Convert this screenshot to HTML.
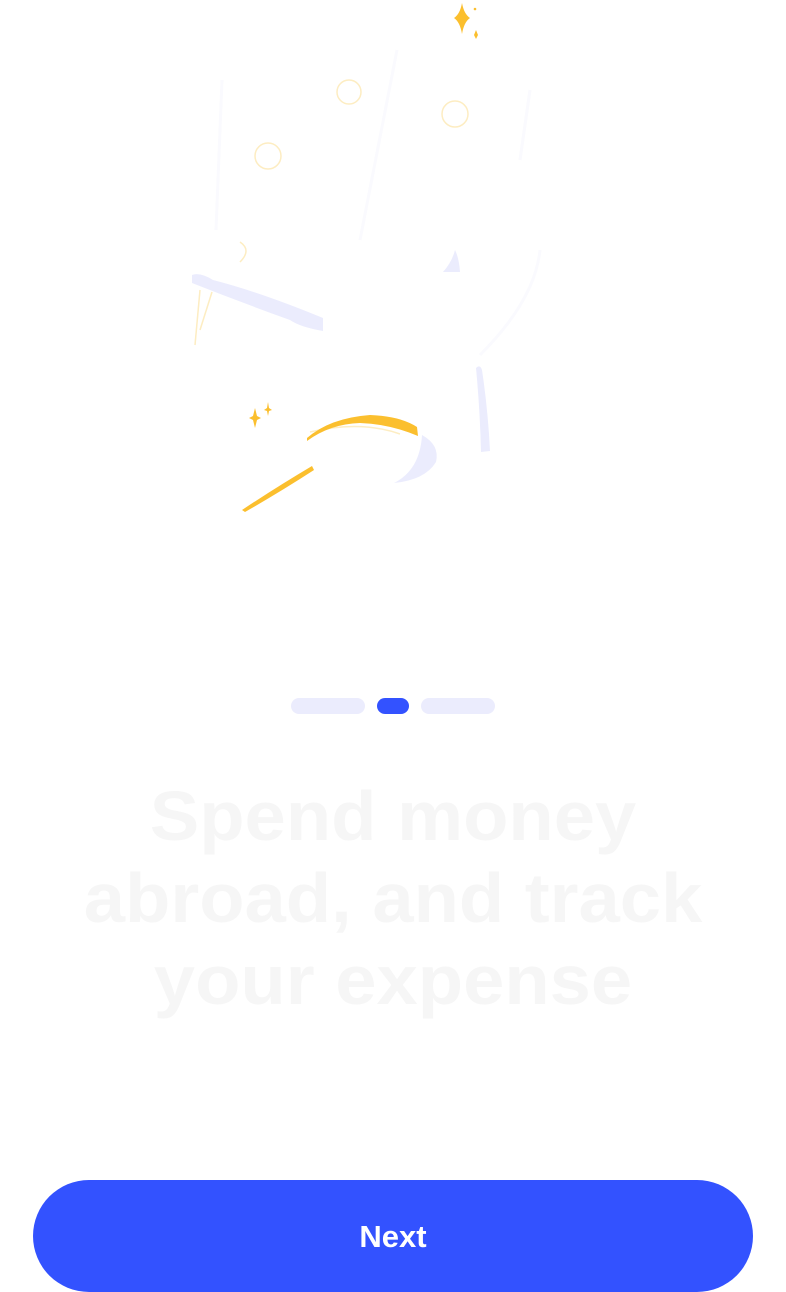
<!DOCTYPE html>
<html><head><meta charset="utf-8"><style>
html,body{margin:0;padding:0;background:#fff;width:786px;height:1292px;overflow:hidden;position:relative;font-family:"Liberation Sans",sans-serif}
.dots{position:absolute;top:698px;left:0;width:786px;height:16px}
.dots div{position:absolute;top:0;height:16px;border-radius:8px;background:#ebecfd}
.title{position:absolute;left:0;width:786px;top:775px;text-align:center;color:#f6f6f6;font-weight:bold;font-size:70px;line-height:82px;letter-spacing:0;transform:scaleX(1.06);transform-origin:393px 0}
.btn{position:absolute;left:33px;top:1180px;width:720px;height:112px;border-radius:56px;background:#3352ff;color:#fff;font-size:31px;text-align:center;line-height:114px;font-weight:bold}
</style></head><body>
<svg width="786" height="560" style="position:absolute;left:0;top:0">
<path d="M462 3 Q464 14 470 18 Q464 22 462 34 Q460 22 454 18 Q460 14 462 3Z" fill="#fbbf2e"/>
<circle cx="475" cy="9" r="1.3" fill="#fbbf2e"/>
<path d="M476 30 L478 35 L476 39 L474 35Z" fill="#fbbf2e"/>
<path d="M255 408 L257 416 L261 418 L257 420 L255 428 L253 420 L249 418 L253 416Z" fill="#fbbf2e"/>
<path d="M268 402 L269 408 L272 410 L269 411 L268 416 L267 411 L264 410 L267 408Z" fill="#fbbf2e"/>
<g fill="none" stroke="#fdedc2" stroke-width="1.5">
<circle cx="349" cy="92" r="12"/><circle cx="455" cy="114" r="13"/><circle cx="268" cy="156" r="13"/><path d="M240 242 Q252 250 240 262"/>
<path d="M200 290 L195 345" /><path d="M212 292 L200 330"/>
<path d="M310 432 Q360 420 400 434"/>
</g>
<g fill="none" stroke="#fafafe" stroke-width="3">
<path d="M222 80 L216 230"/><path d="M397 50 L360 240"/><path d="M530 90 L520 160"/>
<path d="M540 250 Q535 300 480 355"/>
</g>
<path d="M192 275 Q200 272 213 280 Q260 292 323 318 L323 331 Q300 327 290 320 Q240 302 192 283Z" fill="#ebecfd"/>
<path d="M443 272 Q452 262 455 250 Q459 258 460 272Z" fill="#ebecfd"/>
<path d="M476 368 Q480 364 482 370 Q488 410 490 451 L481 452 Q480 410 476 368Z" fill="#ebecfd"/>
<path d="M422 435 Q440 445 436 462 Q425 480 394 483 Q420 470 422 435Z" fill="#ebecfd"/>
<path d="M307 438 Q330 418 370 415 Q400 416 417 427 L418 436 Q390 424 360 423 Q330 424 307 441Z" fill="#fbbf2e"/>
<path d="M242 510 Q275 488 312 466 L314 470 Q280 492 245 512Z" fill="#fbbf2e"/>
</svg>
<div class="dots">
<div style="left:291px;width:74px"></div>
<div style="left:377px;width:32px;background:#3352ff"></div>
<div style="left:421px;width:74px"></div>
</div>
<div class="title">Spend money<br>abroad, and track<br>your expense</div>
<div class="btn">Next</div>
</body></html>
